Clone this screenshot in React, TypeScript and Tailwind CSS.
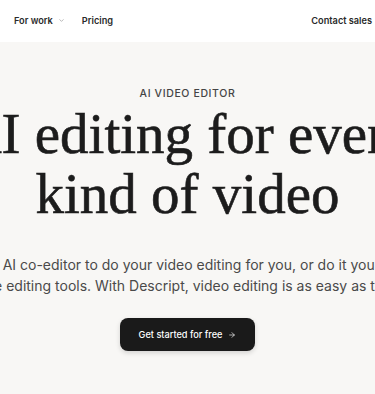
import { ChevronDown, ArrowRight } from "lucide-react";

const sans = "font-['Inter','Liberation_Sans',sans-serif]";

export default function App() {
  return (
    <div className={`w-full min-h-[394px] bg-[#f8f7f5] overflow-hidden ${sans}`}>
      <header className="h-[42px] bg-white flex items-center justify-between pl-[14px] pr-[3px] text-[9.2px] font-semibold text-[#2a2a2a]">
        <nav className="flex items-center gap-[17px]">
          <span className="flex items-center gap-[5px]">
            For work <ChevronDown size={7} strokeWidth={2} className="text-[#888]" />
          </span>
          <span>Pricing</span>
        </nav>
        <span>Contact sales</span>
      </header>

      <section className="flex flex-col items-center pt-[45px]">
        <p className="text-[10.5px] font-medium tracking-[0.06em] text-[#444] leading-[14px]">
          AI VIDEO EDITOR
        </p>

        <div className="w-full flex justify-center">
          <h1 className="shrink-0 w-[700px] text-center font-['Liberation_Serif',serif] text-[57px] leading-[60px] text-[#1c1c1c] [-webkit-text-stroke:0.6px_#1c1c1c] mt-[3px]">
            AI editing for every
            <br />
            kind of video
          </h1>
        </div>

        <div className="w-full flex justify-center mt-[30px]">
          <p className="shrink-0 w-[700px] text-center text-[14px] leading-[21px] text-[#4a4a4a]">
            Use your AI co-editor to do your video editing for you, or do it yourself with
            <br />
            simple editing tools. With Descript, video editing is as easy as typing.
          </p>
        </div>

        <button className="mt-[22px] h-[33px] w-[135px] rounded-[8px] bg-[#1a1a1a] text-white text-[9.2px] font-medium flex items-center justify-center gap-[6px] shadow-[0_2px_5px_rgba(0,0,0,0.15)]">
          Get started for free <ArrowRight size={8} strokeWidth={2} />
        </button>
      </section>
    </div>
  );
}
